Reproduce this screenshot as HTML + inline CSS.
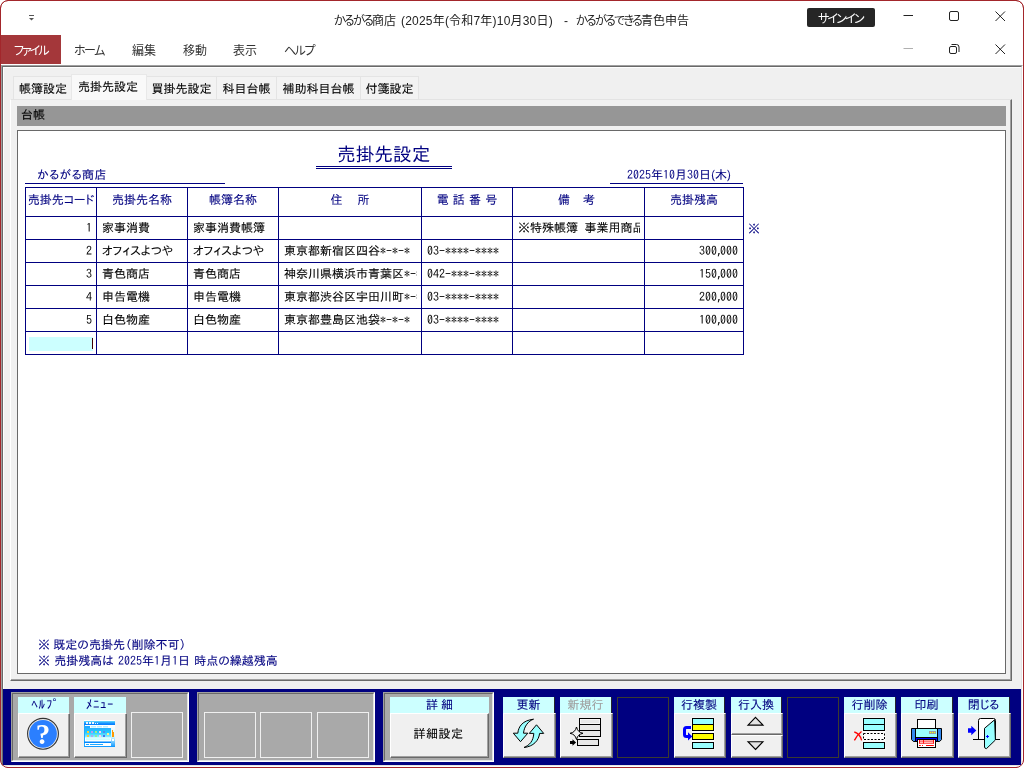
<!DOCTYPE html>
<html lang="ja">
<head>
<meta charset="utf-8">
<title>かるがる商店 - かるがるできる青色申告</title>
<style>
html,body{margin:0;padding:0;}
body{width:1024px;height:768px;overflow:hidden;background:#fff;position:relative;
 font-family:"Liberation Sans","Noto Sans CJK JP",sans-serif;font-size:12px;color:#000;}
#root,#root div,#root svg{position:absolute;box-sizing:border-box;white-space:nowrap;}
#root{left:0;top:0;width:1024px;height:768px;overflow:hidden;border-radius:8px;will-change:transform;}
#winborder{left:0;top:0;width:1024px;height:768px;border:1px solid #a3262b;border-radius:8px;}
#win{left:0;top:0;width:1024px;height:768px;border:1px solid #a3262b;border-radius:8px;background:#fff;}
.ms{font-family:"IPAPGothic","IPAGothic","Noto Sans CJK JP","Liberation Sans",sans-serif;-webkit-text-stroke:0.1px currentColor;}
#root span{position:static;}
.rb{font-feature-settings:"palt" 1;}
.rk{letter-spacing:-1.5px;}
.rk2{letter-spacing:-2px;}
.tk{letter-spacing:-1.7px;}
.g{font-family:"IPAGothic","IPAPGothic","Noto Sans Mono CJK JP","Liberation Mono",monospace;-webkit-text-stroke:0;}
.cm{letter-spacing:-3px;}
.sp3{display:inline-block;width:3px;}
</style>
</head>
<body>
<div id="root">
<div id="win"></div>
<svg style="left:28px;top:14px" width="8" height="8" viewBox="0 0 8 8"><rect x="1" y="1" width="5" height="1" fill="#555"/><path d="M1 4h5L3.5 6.5z" fill="#555"/></svg>
<div class="rb" style="left:334px;top:13px;font-size:12px;line-height:16px;color:#222;"><span id="ta"><span class="tk">かるがる</span>商店</span></div>
<div style="left:401px;top:13px;font-size:12px;line-height:16px;color:#222;letter-spacing:0.2px;"><span id="tb">(2025年(令和7年)10月30日)</span></div>
<div class="rb" style="left:564px;top:13px;font-size:12px;line-height:16px;color:#222;"><span id="tc">-</span></div>
<div class="rb" style="left:576px;top:13px;font-size:12px;line-height:16px;color:#222;"><span id="td"><span class="tk">かるがるできる</span>青色申告</span></div>
<div style="left:807px;top:8px;width:68px;height:19px;background:#262626;border-radius:2px;"></div>
<div class="rb" style="left:818px;top:10px;color:#fff;font-size:12px;line-height:19px;"><span id="si" style="letter-spacing:-1.8px">サインイン</span></div>
<svg style="left:896px;top:4px" width="120" height="60" viewBox="0 0 120 60" fill="none" stroke="#222" stroke-width="1"><path d="M7.500 11.500h9.500"/><rect x="53.5" y="7.5" width="9" height="9" rx="1.5"/><path d="M99.500 7.500l9.500 9.500M109 7.500l-9.500 9.500"/><path d="M7.500 44.500h9.500" stroke="#b0b0b0"/><rect x="53.5" y="42.5" width="7" height="7" rx="1.5"/><path d="M55.5 40.500h5a2.500 2.500 0 0 1 2.500 2.500v5"/><path d="M99.500 40.500l9.500 9.500M109 40.500l-9.500 9.500"/></svg>
<div style="left:1px;top:35px;width:60px;height:29px;background:#a4373a;"></div>
<div class="rb" style="left:14px;top:37px;font-size:12px;line-height:29px;color:#fff;"><span id="rt0" class="rk2">ファイル</span></div>
<div class="rb" style="left:74px;top:37px;font-size:12px;line-height:29px;color:#333;"><span id="rt1" class="rk">ホーム</span></div>
<div class="rb" style="left:132px;top:37px;font-size:12px;line-height:29px;color:#333;"><span id="rt2" class="">編集</span></div>
<div class="rb" style="left:183px;top:37px;font-size:12px;line-height:29px;color:#333;"><span id="rt3" class="">移動</span></div>
<div class="rb" style="left:233px;top:37px;font-size:12px;line-height:29px;color:#333;"><span id="rt4" class="">表示</span></div>
<div class="rb" style="left:284px;top:37px;font-size:12px;line-height:29px;color:#333;"><span id="rt5" class="rk">ヘルプ</span></div>
<div style="left:1px;top:65px;width:1022px;height:702px;background:#f0f0f0;border-top:1px solid #a0a0a0;border-left:1px solid #a0a0a0;border-right:1px solid #fff;border-bottom:1px solid #fff;"></div>
<div style="left:2px;top:66px;width:1020px;height:700px;border-top:1px solid #696969;border-left:1px solid #696969;border-right:1px solid #e3e3e3;border-bottom:1px solid #e3e3e3;"></div>
<div style="left:3px;top:67px;width:1018px;height:698px;border-top:1px solid #fff;border-left:1px solid #fff;"></div>
<div style="left:10px;top:99px;width:1002px;height:582px;background:#f0f0f0;border-top:1px solid #e3e3e3;border-left:1px solid #fff;border-right:1px solid #696969;border-bottom:1px solid #696969;"></div>
<div style="left:11px;top:100px;width:1000px;height:580px;border-right:1px solid #a0a0a0;border-bottom:1px solid #a0a0a0;"></div>
<div class="ms" style="left:13px;top:76px;width:60px;height:23px;background:#f3f3f3;border:1px solid #e4e4e4;border-bottom:none;font-size:12px;line-height:23px;text-align:center;">帳簿設定</div>
<div class="ms" style="left:146px;top:76px;width:71px;height:23px;background:#f3f3f3;border:1px solid #e4e4e4;border-bottom:none;font-size:12px;line-height:23px;text-align:center;">買掛先設定</div>
<div class="ms" style="left:216px;top:76px;width:61px;height:23px;background:#f3f3f3;border:1px solid #e4e4e4;border-bottom:none;font-size:12px;line-height:23px;text-align:center;">科目台帳</div>
<div class="ms" style="left:276px;top:76px;width:85px;height:23px;background:#f3f3f3;border:1px solid #e4e4e4;border-bottom:none;font-size:12px;line-height:23px;text-align:center;">補助科目台帳</div>
<div class="ms" style="left:360px;top:76px;width:59px;height:23px;background:#f3f3f3;border:1px solid #e4e4e4;border-bottom:none;font-size:12px;line-height:23px;text-align:center;">付箋設定</div>
<div class="ms" style="left:71px;top:74px;width:76px;height:26px;background:#f9f9f9;border:1px solid #e8e8e8;border-bottom:none;font-size:12px;line-height:22px;text-align:center;padding-right:2px;">売掛先設定</div>
<div class="ms" style="left:17px;top:106px;width:989px;height:20px;background:#969696;font-size:12px;line-height:17px;padding-left:4px;">台帳</div>
<div style="left:17px;top:130px;width:989px;height:544px;background:#fff;border:1px solid #696969;"></div>
<div class="ms" style="left:337px;top:145px;font-size:18.67px;line-height:19px;color:#000080;-webkit-text-stroke:0;">売掛先設定</div>
<div style="left:316px;top:166px;width:136px;height:1px;background:#000080;"></div>
<div style="left:316px;top:168px;width:136px;height:1px;background:#000080;"></div>
<div class="ms" style="left:37px;top:167px;font-size:12px;line-height:14px;color:#000080;letter-spacing:0.4px;">かるがる商店</div>
<div style="left:25px;top:183px;width:200px;height:1px;background:#000080;"></div>
<div class="ms" style="left:627px;top:167px;font-size:12px;line-height:14px;color:#000080;"><span class="g">2025</span>年<span class="g">10</span>月<span class="g">30</span>日(木)</div>
<div style="left:610px;top:183px;width:133px;height:1px;background:#000080;"></div>
<div style="left:25px;top:187px;width:1px;height:168px;background:#000080;"></div>
<div style="left:96px;top:187px;width:1px;height:168px;background:#000080;"></div>
<div style="left:187px;top:187px;width:1px;height:168px;background:#000080;"></div>
<div style="left:278px;top:187px;width:1px;height:168px;background:#000080;"></div>
<div style="left:421px;top:187px;width:1px;height:168px;background:#000080;"></div>
<div style="left:512px;top:187px;width:1px;height:168px;background:#000080;"></div>
<div style="left:644px;top:187px;width:1px;height:168px;background:#000080;"></div>
<div style="left:743px;top:187px;width:1px;height:168px;background:#000080;"></div>
<div style="left:25px;top:187px;width:719px;height:1px;background:#000080;"></div>
<div style="left:25px;top:216px;width:719px;height:1px;background:#000080;"></div>
<div style="left:25px;top:239px;width:719px;height:1px;background:#000080;"></div>
<div style="left:25px;top:262px;width:719px;height:1px;background:#000080;"></div>
<div style="left:25px;top:285px;width:719px;height:1px;background:#000080;"></div>
<div style="left:25px;top:308px;width:719px;height:1px;background:#000080;"></div>
<div style="left:25px;top:331px;width:719px;height:1px;background:#000080;"></div>
<div style="left:25px;top:354px;width:719px;height:1px;background:#000080;"></div>
<div class="ms" style="left:26px;top:188px;width:70px;height:28px;text-align:center;font-size:12px;line-height:23px;color:#000080;overflow:hidden;">売掛先コード</div>
<div class="ms" style="left:97px;top:188px;width:90px;height:28px;text-align:center;font-size:12px;line-height:23px;color:#000080;overflow:hidden;">売掛先名称</div>
<div class="ms" style="left:188px;top:188px;width:90px;height:28px;text-align:center;font-size:12px;line-height:23px;color:#000080;overflow:hidden;">帳簿名称</div>
<div class="ms" style="left:279px;top:188px;width:142px;height:28px;text-align:center;font-size:12px;line-height:23px;color:#000080;overflow:hidden;">住&#12288;<span class="sp3"></span>所</div>
<div class="ms" style="left:422px;top:188px;width:90px;height:28px;text-align:center;font-size:12px;line-height:23px;color:#000080;overflow:hidden;"><span style="word-spacing:1px">電 話 番 号</span></div>
<div class="ms" style="left:513px;top:188px;width:131px;height:28px;text-align:center;font-size:12px;line-height:23px;color:#000080;overflow:hidden;"><span style="position:relative;left:-2px">備&#12288;<span class="sp3" style="width:1px"></span>考</span></div>
<div class="ms" style="left:645px;top:188px;width:98px;height:28px;text-align:center;font-size:12px;line-height:23px;color:#000080;overflow:hidden;">売掛残高</div>
<div class="ms" style="left:26px;top:217px;width:70px;height:22px;text-align:right;padding-right:4px;font-size:12px;line-height:21px;color:#000;overflow:hidden;"><span class="g">1</span></div>
<div class="ms" style="left:97px;top:217px;width:90px;height:22px;text-align:left;padding-left:5px;font-size:12px;line-height:21px;color:#000;overflow:hidden;">家事消費</div>
<div class="ms" style="left:188px;top:217px;width:90px;height:22px;text-align:left;padding-left:5px;font-size:12px;line-height:21px;color:#000;overflow:hidden;">家事消費帳簿</div>
<div class="ms" style="left:513px;top:217px;width:127px;height:22px;text-align:left;padding-left:5px;font-size:12px;line-height:21px;color:#000;overflow:hidden;">※特殊帳簿&nbsp; 事業用商品</div>
<div class="ms" style="left:26px;top:240px;width:70px;height:22px;text-align:right;padding-right:4px;font-size:12px;line-height:21px;color:#000;overflow:hidden;"><span class="g">2</span></div>
<div class="ms" style="left:97px;top:240px;width:90px;height:22px;text-align:left;padding-left:5px;font-size:12px;line-height:21px;color:#000;overflow:hidden;">オフィスよつや</div>
<div class="ms" style="left:188px;top:240px;width:90px;height:22px;text-align:left;padding-left:5px;font-size:12px;line-height:21px;color:#000;overflow:hidden;">オフィスよつや</div>
<div class="ms" style="left:279px;top:240px;width:138px;height:22px;text-align:left;padding-left:5px;font-size:12px;line-height:21px;color:#000;overflow:hidden;">東京都新宿区四谷<span class="g">*-*-*</span></div>
<div class="ms" style="left:422px;top:240px;width:90px;height:22px;text-align:left;padding-left:5px;font-size:12px;line-height:21px;color:#000;overflow:hidden;"><span class="g">03-****-****</span></div>
<div class="ms" style="left:645px;top:240px;width:98px;height:22px;text-align:right;padding-right:5px;font-size:12px;line-height:21px;color:#000;overflow:hidden;"><span class="g">300<span class="cm">,</span>000</span></div>
<div class="ms" style="left:26px;top:263px;width:70px;height:22px;text-align:right;padding-right:4px;font-size:12px;line-height:21px;color:#000;overflow:hidden;"><span class="g">3</span></div>
<div class="ms" style="left:97px;top:263px;width:90px;height:22px;text-align:left;padding-left:5px;font-size:12px;line-height:21px;color:#000;overflow:hidden;">青色商店</div>
<div class="ms" style="left:188px;top:263px;width:90px;height:22px;text-align:left;padding-left:5px;font-size:12px;line-height:21px;color:#000;overflow:hidden;">青色商店</div>
<div class="ms" style="left:279px;top:263px;width:138px;height:22px;text-align:left;padding-left:5px;font-size:12px;line-height:21px;color:#000;overflow:hidden;">神奈川県横浜市青葉区<span class="g">*-*-*</span></div>
<div class="ms" style="left:422px;top:263px;width:90px;height:22px;text-align:left;padding-left:5px;font-size:12px;line-height:21px;color:#000;overflow:hidden;"><span class="g">042-***-****</span></div>
<div class="ms" style="left:645px;top:263px;width:98px;height:22px;text-align:right;padding-right:5px;font-size:12px;line-height:21px;color:#000;overflow:hidden;"><span class="g">150<span class="cm">,</span>000</span></div>
<div class="ms" style="left:26px;top:286px;width:70px;height:22px;text-align:right;padding-right:4px;font-size:12px;line-height:21px;color:#000;overflow:hidden;"><span class="g">4</span></div>
<div class="ms" style="left:97px;top:286px;width:90px;height:22px;text-align:left;padding-left:5px;font-size:12px;line-height:21px;color:#000;overflow:hidden;">申告電機</div>
<div class="ms" style="left:188px;top:286px;width:90px;height:22px;text-align:left;padding-left:5px;font-size:12px;line-height:21px;color:#000;overflow:hidden;">申告電機</div>
<div class="ms" style="left:279px;top:286px;width:138px;height:22px;text-align:left;padding-left:5px;font-size:12px;line-height:21px;color:#000;overflow:hidden;">東京都渋谷区宇田川町<span class="g">*-*-*</span></div>
<div class="ms" style="left:422px;top:286px;width:90px;height:22px;text-align:left;padding-left:5px;font-size:12px;line-height:21px;color:#000;overflow:hidden;"><span class="g">03-****-****</span></div>
<div class="ms" style="left:645px;top:286px;width:98px;height:22px;text-align:right;padding-right:5px;font-size:12px;line-height:21px;color:#000;overflow:hidden;"><span class="g">200<span class="cm">,</span>000</span></div>
<div class="ms" style="left:26px;top:309px;width:70px;height:22px;text-align:right;padding-right:4px;font-size:12px;line-height:21px;color:#000;overflow:hidden;"><span class="g">5</span></div>
<div class="ms" style="left:97px;top:309px;width:90px;height:22px;text-align:left;padding-left:5px;font-size:12px;line-height:21px;color:#000;overflow:hidden;">白色物産</div>
<div class="ms" style="left:188px;top:309px;width:90px;height:22px;text-align:left;padding-left:5px;font-size:12px;line-height:21px;color:#000;overflow:hidden;">白色物産</div>
<div class="ms" style="left:279px;top:309px;width:138px;height:22px;text-align:left;padding-left:5px;font-size:12px;line-height:21px;color:#000;overflow:hidden;">東京都豊島区池袋<span class="g">*-*-*</span></div>
<div class="ms" style="left:422px;top:309px;width:90px;height:22px;text-align:left;padding-left:5px;font-size:12px;line-height:21px;color:#000;overflow:hidden;"><span class="g">03-****-****</span></div>
<div class="ms" style="left:645px;top:309px;width:98px;height:22px;text-align:right;padding-right:5px;font-size:12px;line-height:21px;color:#000;overflow:hidden;"><span class="g">100<span class="cm">,</span>000</span></div>
<div class="ms" style="left:748px;top:221px;font-size:12px;line-height:14px;color:#000080;">※</div>
<div style="left:29px;top:337px;width:64px;height:14px;background:#ccffff;"></div>
<div style="left:92px;top:338px;width:1px;height:11px;background:#400000;"></div>
<div class="ms" style="left:38px;top:637px;font-size:12px;line-height:14px;color:#000080;">※ 既定の売掛先（削除不可）</div>
<div class="ms" style="left:38px;top:653px;font-size:12px;line-height:14px;color:#000080;word-spacing:1px;">※ 売掛残高は <span class="g">2025</span>年<span class="g">1</span>月<span class="g">1</span>日 時点の繰越残高</div>
<div style="left:3px;top:689px;width:1018px;height:76px;background:#000080;"></div>
<div style="left:11px;top:692px;width:178px;height:70px;background:#a9a9a9;border-top:1px solid #a0a0a0;border-left:1px solid #a0a0a0;border-right:1px solid #fff;border-bottom:1px solid #fff;"></div>
<div style="left:12px;top:693px;width:176px;height:68px;border-top:1px solid #696969;border-left:1px solid #696969;border-right:1px solid #e3e3e3;border-bottom:1px solid #e3e3e3;"></div>
<div style="left:197px;top:692px;width:178px;height:70px;background:#a9a9a9;border-top:1px solid #a0a0a0;border-left:1px solid #a0a0a0;border-right:1px solid #fff;border-bottom:1px solid #fff;"></div>
<div style="left:198px;top:693px;width:176px;height:68px;border-top:1px solid #696969;border-left:1px solid #696969;border-right:1px solid #e3e3e3;border-bottom:1px solid #e3e3e3;"></div>
<div style="left:383px;top:692px;width:111px;height:70px;background:#a9a9a9;border-top:1px solid #a0a0a0;border-left:1px solid #a0a0a0;border-right:1px solid #fff;border-bottom:1px solid #fff;"></div>
<div style="left:384px;top:693px;width:109px;height:68px;border-top:1px solid #696969;border-left:1px solid #696969;border-right:1px solid #e3e3e3;border-bottom:1px solid #e3e3e3;"></div>
<div style="left:131px;top:712px;width:52px;height:46px;border:1px solid #f0f0f0;"></div>
<div style="left:204px;top:712px;width:52px;height:46px;border:1px solid #f0f0f0;"></div>
<div style="left:260px;top:712px;width:52px;height:46px;border:1px solid #f0f0f0;"></div>
<div style="left:317px;top:712px;width:52px;height:46px;border:1px solid #f0f0f0;"></div>
<div class="ms" style="left:18px;top:697px;width:51px;height:16px;background:#ccffff;color:#000080;font-size:12px;line-height:14px;text-align:center;"><span class="g" style="font-size:13px;letter-spacing:0.8px;position:relative;left:2px">ﾍﾙﾌﾟ</span></div>
<div style="left:18px;top:713px;width:52px;height:45px;background:#f0f0f0;border-top:1px solid #fff;border-left:1px solid #fff;border-right:1px solid #696969;border-bottom:1px solid #696969;"></div>
<div style="left:19px;top:714px;width:50px;height:43px;border-right:1px solid #a0a0a0;border-bottom:1px solid #a0a0a0;"></div>
<div class="ms" style="left:74px;top:697px;width:52px;height:16px;background:#ccffff;color:#000080;font-size:12px;line-height:14px;text-align:center;"><span class="g" style="font-size:13px;letter-spacing:0.6px;position:relative;left:0px">ﾒﾆｭｰ</span></div>
<div style="left:74px;top:713px;width:53px;height:45px;background:#f0f0f0;border-top:1px solid #fff;border-left:1px solid #fff;border-right:1px solid #696969;border-bottom:1px solid #696969;"></div>
<div style="left:75px;top:714px;width:51px;height:43px;border-right:1px solid #a0a0a0;border-bottom:1px solid #a0a0a0;"></div>
<div class="ms" style="left:390px;top:697px;width:99px;height:16px;background:#ccffff;color:#000080;font-size:12px;line-height:14px;text-align:center;">詳 細</div>
<div style="left:390px;top:713px;width:99px;height:45px;background:#f0f0f0;border-top:1px solid #fff;border-left:1px solid #fff;border-right:1px solid #696969;border-bottom:1px solid #696969;"></div>
<div style="left:391px;top:714px;width:97px;height:43px;border-right:1px solid #a0a0a0;border-bottom:1px solid #a0a0a0;"></div>
<div class="ms" style="left:389px;top:713px;width:99px;text-align:center;font-size:12px;line-height:41px;color:#000;letter-spacing:0.5px;">詳細設定</div>
<div class="ms" style="left:503px;top:697px;width:51px;height:16px;background:#ccffff;color:#000080;font-size:12px;line-height:14px;text-align:center;">更新</div>
<div style="left:554px;top:697px;width:1px;height:16px;background:#25252a;"></div>
<div style="left:503px;top:713px;width:53px;height:45px;background:#f0f0f0;border-top:1px solid #fff;border-left:1px solid #fff;border-right:1px solid #696969;border-bottom:1px solid #696969;"></div>
<div style="left:504px;top:714px;width:51px;height:43px;border-right:1px solid #a0a0a0;border-bottom:1px solid #a0a0a0;"></div>
<div class="ms" style="left:560px;top:697px;width:51px;height:16px;background:#ccffff;color:#a0a0a0;font-size:12px;line-height:14px;text-align:center;">新規行</div>
<div style="left:611px;top:697px;width:1px;height:16px;background:#25252a;"></div>
<div style="left:560px;top:713px;width:53px;height:45px;background:#f0f0f0;border-top:1px solid #fff;border-left:1px solid #fff;border-right:1px solid #696969;border-bottom:1px solid #696969;"></div>
<div style="left:561px;top:714px;width:51px;height:43px;border-right:1px solid #a0a0a0;border-bottom:1px solid #a0a0a0;"></div>
<div style="left:617px;top:697px;width:52px;height:61px;border:1px solid #3a3a30;"></div>
<div class="ms" style="left:674px;top:697px;width:50px;height:16px;background:#ccffff;color:#000080;font-size:12px;line-height:14px;text-align:center;">行複製</div>
<div style="left:724px;top:697px;width:1px;height:16px;background:#25252a;"></div>
<div style="left:674px;top:713px;width:52px;height:45px;background:#f0f0f0;border-top:1px solid #fff;border-left:1px solid #fff;border-right:1px solid #696969;border-bottom:1px solid #696969;"></div>
<div style="left:675px;top:714px;width:50px;height:43px;border-right:1px solid #a0a0a0;border-bottom:1px solid #a0a0a0;"></div>
<div class="ms" style="left:731px;top:697px;width:50px;height:16px;background:#ccffff;color:#000080;font-size:12px;line-height:14px;text-align:center;">行入換</div>
<div style="left:781px;top:697px;width:1px;height:16px;background:#25252a;"></div>
<div style="left:731px;top:713px;width:52px;height:22px;background:#f0f0f0;border-top:1px solid #fff;border-left:1px solid #fff;border-right:1px solid #696969;border-bottom:1px solid #696969;"></div>
<div style="left:732px;top:714px;width:50px;height:20px;border-right:1px solid #a0a0a0;border-bottom:1px solid #a0a0a0;"></div>
<div style="left:731px;top:735px;width:52px;height:23px;background:#f0f0f0;border-top:1px solid #fff;border-left:1px solid #fff;border-right:1px solid #696969;border-bottom:1px solid #696969;"></div>
<div style="left:732px;top:736px;width:50px;height:21px;border-right:1px solid #a0a0a0;border-bottom:1px solid #a0a0a0;"></div>
<div style="left:787px;top:697px;width:52px;height:61px;border:1px solid #3a3a30;"></div>
<div class="ms" style="left:844px;top:697px;width:51px;height:16px;background:#ccffff;color:#000080;font-size:12px;line-height:14px;text-align:center;">行削除</div>
<div style="left:895px;top:697px;width:1px;height:16px;background:#25252a;"></div>
<div style="left:844px;top:713px;width:53px;height:45px;background:#f0f0f0;border-top:1px solid #fff;border-left:1px solid #fff;border-right:1px solid #696969;border-bottom:1px solid #696969;"></div>
<div style="left:845px;top:714px;width:51px;height:43px;border-right:1px solid #a0a0a0;border-bottom:1px solid #a0a0a0;"></div>
<div class="ms" style="left:901px;top:697px;width:51px;height:16px;background:#ccffff;color:#000080;font-size:12px;line-height:14px;text-align:center;">印刷</div>
<div style="left:952px;top:697px;width:1px;height:16px;background:#25252a;"></div>
<div style="left:901px;top:713px;width:53px;height:45px;background:#f0f0f0;border-top:1px solid #fff;border-left:1px solid #fff;border-right:1px solid #696969;border-bottom:1px solid #696969;"></div>
<div style="left:902px;top:714px;width:51px;height:43px;border-right:1px solid #a0a0a0;border-bottom:1px solid #a0a0a0;"></div>
<div class="ms" style="left:958px;top:697px;width:51px;height:16px;background:#ccffff;color:#000080;font-size:12px;line-height:14px;text-align:center;">閉じる</div>
<div style="left:1009px;top:697px;width:1px;height:16px;background:#25252a;"></div>
<div style="left:958px;top:713px;width:53px;height:45px;background:#f0f0f0;border-top:1px solid #fff;border-left:1px solid #fff;border-right:1px solid #696969;border-bottom:1px solid #696969;"></div>
<div style="left:959px;top:714px;width:51px;height:43px;border-right:1px solid #a0a0a0;border-bottom:1px solid #a0a0a0;"></div>
<svg id="icons" style="left:0;top:690px" width="1024" height="76" viewBox="0 690 1024 76" shape-rendering="auto">
<defs>
<linearGradient id="gTitle" x1="0" y1="0" x2="0" y2="1"><stop offset="0" stop-color="#66ddff"/><stop offset="0.5" stop-color="#1a99ff"/><stop offset="1" stop-color="#0077ff"/></linearGradient>
<linearGradient id="gBody" x1="0" y1="0" x2="0" y2="1"><stop offset="0" stop-color="#2ab0ff"/><stop offset="0.3" stop-color="#20c8ff"/><stop offset="0.6" stop-color="#7eeaff"/><stop offset="0.8" stop-color="#d0fbff"/><stop offset="1" stop-color="#ffffff"/></linearGradient>
<linearGradient id="gSide" x1="0" y1="0" x2="0" y2="1"><stop offset="0" stop-color="#ffffff"/><stop offset="0.55" stop-color="#ccf4ff"/><stop offset="1" stop-color="#1199ff"/></linearGradient>
</defs>
<!-- help -->
<g>
<circle cx="43" cy="733.8" r="15.4" fill="#e8e8e8" stroke="#333" stroke-width="1.1"/>
<circle cx="43" cy="733.8" r="13.9" fill="#2b7fff"/>
<text x="43" y="744.3" text-anchor="middle" style="font-family:'Liberation Serif',serif;font-weight:bold;font-size:29px" fill="#fff">?</text>
</g>
<!-- menu -->
<g>
<rect x="84" y="720" width="31" height="27" fill="#fff"/>
<rect x="84" y="721" width="31" height="4" fill="url(#gTitle)"/>
<rect x="86" y="722" width="2" height="2" fill="#eef8ff"/><rect x="89" y="722" width="2" height="2" fill="#eef8ff"/><rect x="92" y="722" width="2" height="2" fill="#eef8ff"/>
<rect x="95" y="723" width="1" height="1" fill="#eef8ff"/><rect x="97" y="723" width="1" height="1" fill="#eef8ff"/>
<rect x="84" y="725" width="1" height="22" fill="#22aaff"/>
<rect x="85" y="726" width="5" height="3" fill="#22aaff"/>
<rect x="91" y="726" width="5" height="1.500" fill="#bbf0ff"/><rect x="97" y="726" width="5" height="1.500" fill="#bbf0ff"/><rect x="103" y="726" width="5" height="1.500" fill="#bbf0ff"/>
<rect x="85" y="728" width="26" height="14" fill="url(#gBody)"/>
<rect x="111" y="725" width="4" height="22" fill="url(#gSide)"/>
<g>
<rect x="87" y="731" width="2" height="2" fill="#ffcc33"/><rect x="91" y="731" width="2" height="2" fill="#bb99ee"/><rect x="95" y="731" width="2" height="2" fill="#99ee88"/><rect x="99" y="731" width="2" height="2" fill="#ffccee"/><rect x="103" y="731" width="2" height="2" fill="#5588ee"/>
<rect x="87" y="735" width="2" height="2" fill="#ffcc33"/><rect x="91" y="735" width="2" height="2" fill="#aaaaf0"/><rect x="95" y="735" width="2" height="2" fill="#88ee99"/><rect x="99" y="735" width="2" height="2" fill="#ffccee"/><rect x="103" y="735" width="2" height="2" fill="#4477ee"/>
<rect x="107" y="733" width="2" height="2" fill="#ffee88"/>
</g>
<rect x="85" y="737.500" width="26" height="4" fill="#fff"/>
<rect x="86" y="738.200" width="24" height="2" fill="#ccffff"/>
<rect x="112" y="730" width="1" height="7" fill="#ff9900"/><rect x="113" y="732" width="1" height="5" fill="#ff9900"/>
<rect x="112" y="739" width="2" height="2" fill="#fff"/>
<rect x="84" y="741.500" width="27" height="1.500" fill="#0088ff"/>
<rect x="85" y="743" width="26" height="3" fill="#fff"/>
<rect x="86" y="744" width="3" height="1" fill="#22aaff"/><rect x="90" y="744" width="13" height="1" fill="#22aaff"/>
<rect x="84" y="746" width="31" height="1" fill="#1199ff"/>
</g>
<!-- refresh -->
<g fill="#99ffff" stroke="#000" stroke-width="1" stroke-linejoin="miter">
<path d="M513.300 733.200 L517.800 733.200 C518.500 726.500 522.500 720.500 533.500 719.200 C528.500 721 524.200 726 523.500 733.200 L527.800 733.200 L520.500 741.700 Z"/>
<path d="M536.500 724.800 L543.700 733.400 L539.600 733.400 C538.800 740.500 533.500 746.500 524 747.500 C529.500 745.200 533.400 741 533.800 733.400 L529.300 733.400 Z"/>
</g>
<!-- new row -->
<g stroke="#000" stroke-width="1" fill="#e8e8e8">
<rect x="579.500" y="718.500" width="21" height="18"/>
<path d="M579.500 724.500h21M579.500 730.500h21" fill="none"/>
<rect x="580.500" y="719.500" width="19" height="4" fill="none" stroke="#fff" stroke-width="0.600"/>
<rect x="577.500" y="739.500" width="21" height="6"/>
<path d="M576.500 727 C577.500 731 579.500 732.600 583 733.300 C579.500 734 577.500 735.600 576.500 739.500 C575.500 735.600 573.500 734 570 733.300 C573.500 732.600 575.500 731 576.500 727 Z" fill="#f0f0f0"/>
<path d="M570 741h2.500v-1.800l3.600 3.300l-3.600 3.300v-1.800h-2.500z" fill="#000" stroke="none"/>
</g>
<!-- copy row -->
<g stroke="#000" stroke-width="1">
<rect x="691.500" y="717.500" width="23" height="32" fill="#fff" stroke="none" opacity="0.700"/>
<rect x="692.500" y="718.500" width="21" height="6" fill="#99ffff"/>
<rect x="692.500" y="724.500" width="21" height="6" fill="#ffff00"/>
<rect x="692.500" y="733.500" width="21" height="6" fill="#ffff00"/>
<rect x="692.500" y="742.500" width="21" height="6" fill="#99ffff"/>
<path d="M691 727.500 H686.500 Q684.500 727.500 684.500 729.500 V734.500 Q684.500 736.500 686.500 736.500 H688.500" fill="none" stroke="#0000ff" stroke-width="3"/>
<path d="M688 732.300 L692.300 736.400 L688 740.400 Z" fill="#0000ff" stroke="none"/>
</g>
<!-- swap -->
<g stroke="#000" stroke-width="1.100" fill="#e4e4e4" stroke-linejoin="miter">
<path d="M755.500 717.300 L763 725.100 H748 Z"/>
<path d="M755.500 749.500 L763 741.700 H748 Z"/>
</g>
<!-- delete row -->
<g stroke="#000" stroke-width="1">
<rect x="862.500" y="717.500" width="23" height="32" fill="#fff" stroke="none" opacity="0.700"/>
<rect x="863.500" y="718.500" width="21" height="6" fill="#99ffff"/>
<rect x="863.500" y="724.500" width="21" height="6" fill="#99ffff"/>
<rect x="863.500" y="733.500" width="21" height="6" fill="#fff" stroke-dasharray="2 1.500"/>
<rect x="863.500" y="742.500" width="21" height="6" fill="#99ffff"/>
<path d="M854.300 732 C858 733 860.500 736 861.600 740.300" fill="none" stroke="#ff0000" stroke-width="1.300"/>
<path d="M861.500 731.600 C858.500 734 856 737 854.400 740.400" fill="none" stroke="#ff0000" stroke-width="1.300"/>
</g>
<!-- print -->
<g stroke="#000" stroke-width="1">
<rect x="917.500" y="719.500" width="18" height="9" fill="#fff"/>
<path d="M911.500 728.500 H941.500 V739.600 L939.600 741.500 H913.400 L911.500 739.600 Z" fill="#3388ee"/>
<rect x="915.500" y="728.500" width="22" height="13" fill="#0000ff"/>
<rect x="915.500" y="728.500" width="22" height="9" fill="#99ffff"/>
<rect x="929" y="731" width="7" height="3" fill="#a0a0a0" stroke="none"/>
<rect x="930" y="732" width="1" height="1" fill="#ffff00" stroke="none"/><rect x="932" y="732" width="1" height="1" fill="#ffff00" stroke="none"/><rect x="934" y="732" width="1" height="1" fill="#ffff00" stroke="none"/>
<rect x="917.500" y="739.500" width="18" height="8" fill="#fff"/>
<path d="M919.500 740V743.500M923.500 740V743.500M933.500 740V743.500" fill="none" stroke="#ff0000" stroke-width="0.900"/>
<path d="M919.100 741.100H933.900M919.100 743.200H933.900" fill="none" stroke="#ff0000" stroke-width="0.900"/>
<path d="M919 745.500H920.800M922 745.500H923M926 745.500H933.800" fill="none" stroke="#ff0000" stroke-width="1"/>
</g>
<!-- close door -->
<g stroke="#000" stroke-width="1">
<path d="M978.500 739.500 V720.500 Q978.500 718.500 980.500 718.500 H993.500 Q995.500 718.500 995.500 720.500 V739.500" fill="#fff"/>
<path d="M973 739.500H1000" fill="none"/>
<path d="M994.600 719.800 L984.500 728.300 V747 Q984.800 748.800 986.500 748.600 L995.400 740 Z" fill="#99ffff" stroke-linejoin="round"/>
<path d="M986 736.500h3M987.500 735v3" stroke="#0000ff" fill="none"/>
<path d="M968 728.200h3.300v-2.400l5 4.700l-5 4.700v-2.400h-3.300z" fill="#0000ff" stroke="none"/>
</g>
</svg>

<div id="winborder"></div>
</div>
</body>
</html>
